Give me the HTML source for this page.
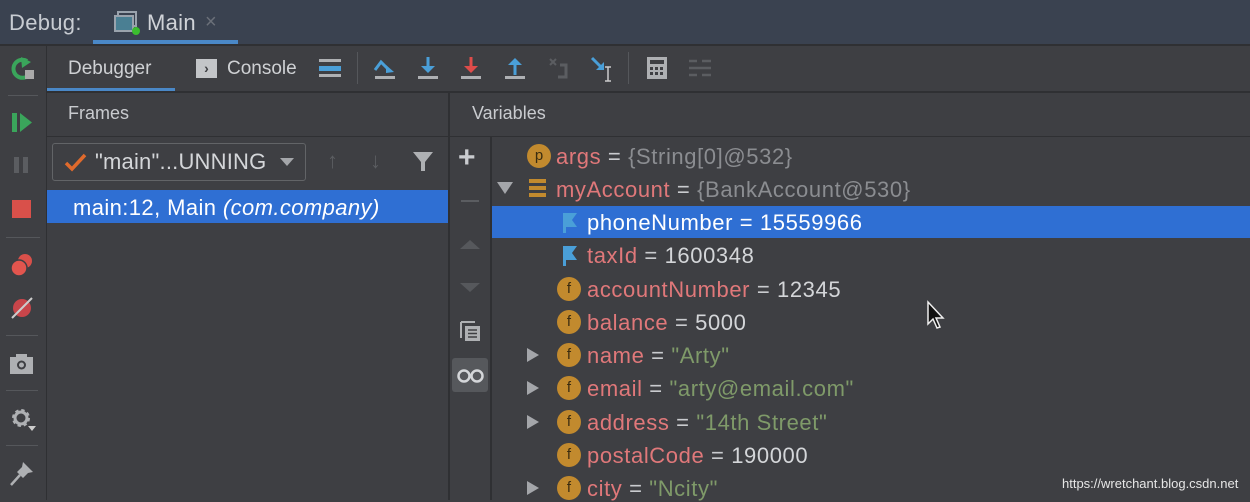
<!DOCTYPE html>
<html><head><meta charset="utf-8"><style>
*{margin:0;padding:0;box-sizing:border-box}
body{width:1250px;height:500px;overflow:hidden;background:#3e3f43;font-family:"Liberation Sans",sans-serif;color:#c9cbcf;position:relative}
.a{position:absolute}
.t{font-size:20px;white-space:nowrap}
.v{font-size:22px;letter-spacing:0.6px;white-space:nowrap}
.red{color:#e0787a}.grn{color:#7f9a69}.gry{color:#8b8d91}.wht{color:#d4d6d9}
.fi{position:absolute;width:24px;height:24px;border-radius:50%;background:#c28a2e;color:#3a2c10;font-size:15px;text-align:center;line-height:23px}
.tri{position:absolute;width:0;height:0;border-top:7px solid transparent;border-bottom:7px solid transparent;border-left:12px solid #a4a6aa}
.sep{position:absolute;background:#2f3033}
</style></head><body>
<div class="a" style="left:0;top:0;width:1250px;height:44px;background:#3a4250"></div>
<div class="a v" style="left:9px;top:10px;color:#c8ccd2;letter-spacing:0.3px">Debug:</div>
<svg class="a" style="left:114px;top:10px" width="26" height="26"><rect x="4" y="2" width="18" height="14" fill="none" stroke="#9aa3ad" stroke-width="2"/><rect x="1" y="6" width="18" height="15" fill="#4a7f93" stroke="#9aa3ad" stroke-width="2"/><circle cx="22" cy="21" r="4" fill="#3bbd2f"/></svg>
<div class="a v" style="left:147px;top:10px;color:#d0d3d8;letter-spacing:0.3px">Main</div>
<div class="a t" style="left:205px;top:11px;color:#6b7079">×</div>
<div class="a" style="left:93px;top:40px;width:145px;height:4px;background:#4a88c7"></div>
<div class="sep" style="left:0;top:44px;width:1250px;height:2px"></div>
<div class="sep" style="left:46px;top:46px;width:1px;height:454px"></div>
<svg class="a" style="left:9px;top:55px" width="28" height="28"><path d="M18 6 A9 9 0 1 0 20 20" fill="none" stroke="#3aa55b" stroke-width="4"/><path d="M12 2 L22 7 L13 13Z" fill="#3aa55b"/><rect x="16" y="15" width="9" height="9" fill="#aaa"/></svg>
<div class="sep" style="left:8px;top:95px;width:30px;height:1px;background:#55575b"></div>
<svg class="a" style="left:10px;top:110px" width="26" height="26"><rect x="2" y="3" width="5" height="19" fill="#3aa55b"/><path d="M10 3 L22 12.5 L10 22Z" fill="#3aa55b"/></svg>
<svg class="a" style="left:12px;top:155px" width="20" height="20"><rect x="2" y="2" width="5" height="16" fill="#5b5d61"/><rect x="11" y="2" width="5" height="16" fill="#5b5d61"/></svg>
<div class="a" style="left:12px;top:200px;width:19px;height:18px;background:#d9504a"></div>
<div class="sep" style="left:6px;top:237px;width:34px;height:1px;background:#55575b"></div>
<svg class="a" style="left:9px;top:252px" width="26" height="26"><circle cx="16" cy="9" r="7" fill="#d9504a"/><circle cx="10" cy="16" r="8" fill="#e2554e" stroke="#3e3f43" stroke-width="1.5"/></svg>
<svg class="a" style="left:9px;top:295px" width="26" height="26"><circle cx="13" cy="13" r="9" fill="#c8454a"/><path d="M3 23 L23 3" stroke="#ccc" stroke-width="2"/></svg>
<div class="sep" style="left:6px;top:335px;width:32px;height:1px;background:#55575b"></div>
<svg class="a" style="left:9px;top:352px" width="26" height="24"><rect x="1" y="5" width="23" height="17" fill="#aeb0b3"/><rect x="7" y="2" width="11" height="5" fill="#aeb0b3"/><circle cx="12.5" cy="13" r="4.5" fill="#3e3f43"/><circle cx="12.5" cy="13" r="2.5" fill="#aeb0b3"/></svg>
<div class="sep" style="left:6px;top:390px;width:32px;height:1px;background:#55575b"></div>
<svg class="a" style="left:9px;top:406px" width="30" height="30"><circle cx="12" cy="12" r="7" fill="none" stroke="#aeb0b3" stroke-width="4" stroke-dasharray="3 2.5"/><circle cx="12" cy="12" r="6" fill="none" stroke="#aeb0b3" stroke-width="3"/><path d="M19 20 L27 20 L23 25Z" fill="#ccc"/></svg>
<div class="sep" style="left:6px;top:445px;width:32px;height:1px;background:#55575b"></div>
<svg class="a" style="left:9px;top:460px" width="26" height="28"><path d="M14 2 L24 12 L19 13 L14 18 L8 12 L13 7Z" fill="#aeb0b3"/><path d="M11 15 L2 25" stroke="#aeb0b3" stroke-width="2.5"/></svg>
<div class="a t" style="left:68px;top:58px;font-size:19px;color:#cfd1d4">Debugger</div>
<div class="a" style="left:47px;top:88px;width:128px;height:4px;background:#4a88c7"></div>
<div class="a" style="left:196px;top:59px;width:21px;height:19px;background:#c3c5c8;color:#3e3f43;font-size:14px;font-weight:bold;text-align:center;line-height:19px">›</div>
<div class="a t" style="left:227px;top:58px;font-size:19px;color:#cfd1d4">Console</div>
<svg class="a" style="left:319px;top:57px" width="24" height="22"><rect x="0" y="2" width="22" height="3" fill="#aeb0b3"/><rect x="0" y="9" width="22" height="5" fill="#4a9fd8"/><rect x="0" y="17" width="22" height="3" fill="#aeb0b3"/></svg>
<div class="sep" style="left:357px;top:52px;width:1px;height:32px;background:#55575b"></div>
<svg class="a" style="left:372px;top:55px" width="26" height="26"><path d="M3 15 L9 7 L17 15" fill="none" stroke="#4a9fd8" stroke-width="3"/><path d="M14 10 L22 17 L14 18Z" fill="#4a9fd8"/><rect x="3" y="21" width="20" height="3" fill="#aeb0b3"/></svg>
<svg class="a" style="left:416px;top:55px" width="26" height="26"><path d="M12 2 L12 14" stroke="#4a9fd8" stroke-width="3"/><path d="M5 11 L19 11 L12 18Z" fill="#4a9fd8"/><rect x="2" y="21" width="20" height="3" fill="#aeb0b3"/></svg>
<svg class="a" style="left:459px;top:55px" width="26" height="26"><path d="M12 2 L12 14" stroke="#df4c4a" stroke-width="3"/><path d="M5 11 L19 11 L12 18Z" fill="#df4c4a"/><rect x="2" y="21" width="20" height="3" fill="#aeb0b3"/></svg>
<svg class="a" style="left:503px;top:55px" width="26" height="26"><path d="M12 8 L12 20" stroke="#4a9fd8" stroke-width="3"/><path d="M5 10 L19 10 L12 3Z" fill="#4a9fd8"/><rect x="2" y="21" width="20" height="3" fill="#aeb0b3"/></svg>
<svg class="a" style="left:546px;top:55px" width="26" height="26"><path d="M4 4 L10 10 M10 4 L4 10" stroke="#5b5d61" stroke-width="2"/><path d="M14 10 L20 10 L20 22 L12 22" fill="none" stroke="#5b5d61" stroke-width="3"/></svg>
<svg class="a" style="left:589px;top:55px" width="28" height="28"><path d="M3 3 L13 13" stroke="#4a9fd8" stroke-width="3"/><path d="M15 7 L15 15 L7 15Z" fill="#4a9fd8"/><path d="M19 12 L19 26 M16 12 L22 12 M16 26 L22 26" stroke="#ccc" stroke-width="1.5"/></svg>
<div class="sep" style="left:628px;top:52px;width:1px;height:32px;background:#55575b"></div>
<svg class="a" style="left:646px;top:56px" width="22" height="24"><rect x="1" y="1" width="20" height="22" fill="#aeb0b3"/><rect x="4" y="4" width="14" height="4" fill="#3e3f43"/><g fill="#3e3f43"><rect x="4" y="11" width="3" height="3"/><rect x="9" y="11" width="3" height="3"/><rect x="14" y="11" width="3" height="3"/><rect x="4" y="16" width="3" height="3"/><rect x="9" y="16" width="3" height="3"/><rect x="14" y="16" width="3" height="3"/></g></svg>
<svg class="a" style="left:688px;top:57px" width="24" height="22"><g stroke="#5b5d61" stroke-width="2.5"><path d="M1 4 H9 M14 4 H23 M1 11 H23 M1 18 H9 M14 18 H23"/></g></svg>
<div class="sep" style="left:47px;top:91px;width:1203px;height:2px"></div>
<div class="a t" style="left:68px;top:103px;font-size:18px;color:#c9cbcf">Frames</div>
<div class="a t" style="left:472px;top:103px;font-size:18px;color:#c9cbcf">Variables</div>
<div class="sep" style="left:47px;top:136px;width:1203px;height:1px"></div>
<div class="sep" style="left:448px;top:93px;width:2px;height:407px"></div>
<div class="a" style="left:52px;top:143px;width:254px;height:38px;border:1px solid #626467;border-radius:3px"></div>
<svg class="a" style="left:64px;top:152px" width="24" height="20"><path d="M2 11 L8 17 L21 3" fill="none" stroke="#e06a2c" stroke-width="3.5"/></svg>
<div class="a v" style="left:95px;top:149px;color:#d4d6d9;letter-spacing:0.2px">"main"...UNNING</div>
<div class="a" style="left:280px;top:158px;border-left:7px solid transparent;border-right:7px solid transparent;border-top:8px solid #a4a6aa"></div>
<div class="a t" style="left:327px;top:148px;color:#5b5d61;font-size:22px">↑</div>
<div class="a t" style="left:370px;top:148px;color:#5b5d61;font-size:22px">↓</div>
<svg class="a" style="left:412px;top:151px" width="22" height="22"><path d="M1 1 H21 L13 11 V20 H9 V11Z" fill="#aeb0b3"/></svg>
<div class="a" style="left:47px;top:190px;width:401px;height:33px;background:#2f6fd3"></div>
<div class="a v" style="left:73px;top:195px;color:#fff;letter-spacing:0.4px">main:12, Main <i>(com.company)</i></div>
<div class="a" style="left:452px;top:358px;width:36px;height:34px;background:#56585c;border-radius:3px"></div>
<div class="sep" style="left:490px;top:137px;width:2px;height:363px"></div>
<div class="a t" style="left:458px;top:141px;font-size:30px;color:#c9cbcf;font-weight:bold">+</div>
<div class="a" style="left:461px;top:200px;width:18px;height:2px;background:#5b5d61"></div>
<div class="a" style="left:460px;top:240px;border-left:10px solid transparent;border-right:10px solid transparent;border-bottom:9px solid #56585c"></div>
<div class="a" style="left:460px;top:283px;border-left:10px solid transparent;border-right:10px solid transparent;border-top:9px solid #56585c"></div>
<svg class="a" style="left:459px;top:320px" width="24" height="24"><path d="M2 2 V18 M2 2 H16" stroke="#aeb0b3" stroke-width="2" fill="none"/><rect x="6" y="6" width="15" height="15" fill="#aeb0b3"/><path d="M9 10 H18 M9 13.5 H18 M9 17 H18" stroke="#3e3f43" stroke-width="1.5"/></svg>
<svg class="a" style="left:456px;top:366px" width="30" height="18"><circle cx="8" cy="10" r="5.5" fill="none" stroke="#d4d6d9" stroke-width="2.5"/><circle cx="21" cy="10" r="5.5" fill="none" stroke="#d4d6d9" stroke-width="2.5"/></svg>
<div class="a" style="left:492px;top:206px;width:758px;height:32px;background:#2f6fd3"></div>
<div class="fi" style="left:527px;top:144px">p</div>
<div class="a v" style="left:556px;top:144px"><span class="red">args</span> = <span class="gry">{String[0]@532}</span></div>
<div class="a" style="left:497px;top:182px;border-left:8px solid transparent;border-right:8px solid transparent;border-top:12px solid #a4a6aa"></div>
<svg class="a" style="left:528px;top:178px" width="20" height="20"><rect x="1" y="1" width="17" height="4" fill="#c28a2e"/><rect x="1" y="8" width="17" height="4" fill="#c28a2e"/><rect x="1" y="15" width="17" height="4" fill="#c28a2e"/></svg>
<div class="a v" style="left:556px;top:177px"><span class="red">myAccount</span> = <span class="gry">{BankAccount@530}</span></div>
<svg class="a" style="left:561px;top:212px" width="18" height="22"><path d="M2 1 H16 L11 8 L16 15 H5 V21 H2Z" fill="#4a9fd8"/></svg>
<div class="a v" style="left:587px;top:210px;color:#fff">phoneNumber = 15559966</div>
<svg class="a" style="left:561px;top:245px" width="18" height="22"><path d="M2 1 H16 L11 8 L16 15 H5 V21 H2Z" fill="#4a9fd8"/></svg>
<div class="a v" style="left:587px;top:243px"><span class="red">taxId</span> = <span class="wht">1600348</span></div>
<div class="fi" style="left:557px;top:277px">f</div>
<div class="a v" style="left:587px;top:277px"><span class="red">accountNumber</span> = <span class="wht">12345</span></div>
<div class="fi" style="left:557px;top:310px">f</div>
<div class="a v" style="left:587px;top:310px"><span class="red">balance</span> = <span class="wht">5000</span></div>
<div class="tri" style="left:527px;top:348px"></div>
<div class="fi" style="left:557px;top:343px">f</div>
<div class="a v" style="left:587px;top:343px"><span class="red">name</span> = <span class="grn">"Arty"</span></div>
<div class="tri" style="left:527px;top:381px"></div>
<div class="fi" style="left:557px;top:376px">f</div>
<div class="a v" style="left:587px;top:376px"><span class="red">email</span> = <span class="grn">"arty@email.com"</span></div>
<div class="tri" style="left:527px;top:415px"></div>
<div class="fi" style="left:557px;top:410px">f</div>
<div class="a v" style="left:587px;top:410px"><span class="red">address</span> = <span class="grn">"14th Street"</span></div>
<div class="fi" style="left:557px;top:443px">f</div>
<div class="a v" style="left:587px;top:443px"><span class="red">postalCode</span> = <span class="wht">190000</span></div>
<div class="tri" style="left:527px;top:481px"></div>
<div class="fi" style="left:557px;top:476px">f</div>
<div class="a v" style="left:587px;top:476px"><span class="red">city</span> = <span class="grn">"Ncity"</span></div>
<svg class="a" style="left:926px;top:300px" width="20" height="32"><path d="M2 2 V24 L7 19 L11 28 L14 27 L10 18 L17 18Z" fill="#111" stroke="#eee" stroke-width="1.5"/></svg>
<div class="a" style="left:1062px;top:476px;font-size:13px;color:#e6e6e6;white-space:nowrap">https://wretchant.blog.csdn.net</div>
</body></html>
